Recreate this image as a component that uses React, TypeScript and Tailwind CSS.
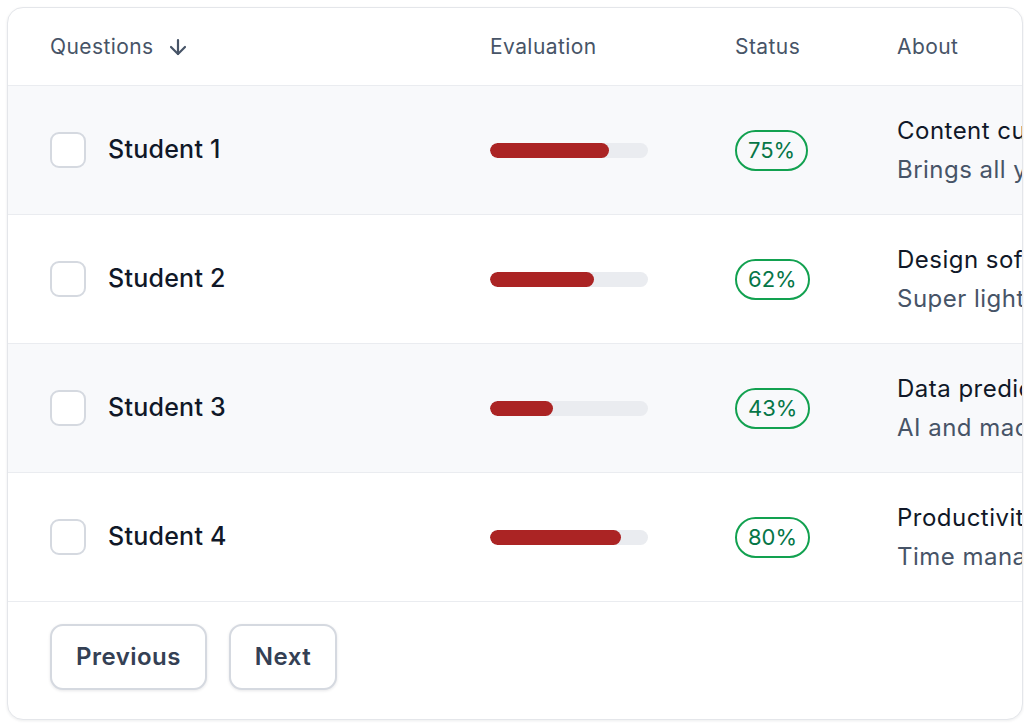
import React from "react";
import { ArrowDown } from "lucide-react";

const rows = [
  { name: "Student 1", pct: 75, fill: 75, title: "Content curation app", sub: "Brings all your news into one place" },
  { name: "Student 2", pct: 62, fill: 66, title: "Design software", sub: "Super lightweight design app" },
  { name: "Student 3", pct: 43, fill: 40, title: "Data prediction", sub: "AI and machine learning data" },
  { name: "Student 4", pct: 80, fill: 83, title: "Productivity app", sub: "Time management and productivity" },
];

export default function App() {
  return (
    <div className="w-[1024px] h-[725px] overflow-hidden bg-white pl-[7px] pt-[7px]" style={{ fontFamily: "Inter, 'Noto Sans', sans-serif" }}>
      <div className="w-[1016px] h-[713px] rounded-[16px] border border-[#e4e6ea] bg-white shadow-[0_1px_3px_rgba(16,24,40,0.08)] overflow-hidden flex flex-col">
        {/* header */}
        <div className="flex items-center h-[78px] border-b border-[#eaecf0] pl-[42px] text-[21px] tracking-[0.02em] text-[#475467] shrink-0">
          <div className="w-[440px] flex items-center gap-[12px]">
            <span>Questions</span>
            <ArrowDown className="w-[24px] h-[24px] text-[#475467]" strokeWidth={2.2} />
          </div>
          <div className="w-[245px]">Evaluation</div>
          <div className="w-[162px]">Status</div>
          <div className="flex-1 whitespace-nowrap">About</div>
        </div>
        {rows.map((r, i) => (
          <div
            key={r.name}
            className={`flex items-center h-[129px] border-b border-[#eaecf0] pl-[42px] shrink-0 ${i % 2 === 0 ? "bg-[#f8f9fb]" : "bg-white"}`}
          >
            <div className="w-[440px] flex items-center gap-[22px]">
              <div className="w-[36px] h-[36px] rounded-[9px] border-2 border-[#d5d9e0] bg-white" />
              <span className="text-[25px] font-medium tracking-[0.01em] text-[#101828]">{r.name}</span>
            </div>
            <div className="w-[245px]">
              <div className="w-[158px] h-[15px] rounded-full bg-[#eaecf0] overflow-hidden">
                <div className="h-full rounded-full bg-[#ab2424]" style={{ width: `${r.fill}%` }} />
              </div>
            </div>
            <div className="w-[162px]">
              <span className="inline-flex items-center justify-center h-[41px] px-[11px] rounded-full border-2 border-[#12a150] text-[22px] text-[#067647]">
                {r.pct}%
              </span>
            </div>
            <div className="flex-1 overflow-hidden whitespace-nowrap text-[24px] tracking-[0.02em] leading-[39px] pb-[1px]">
              <div className="text-[#101828]">{r.title}</div>
              <div className="text-[#475467]">{r.sub}</div>
            </div>
          </div>
        ))}
        <div className="flex items-start gap-[22px] pl-[42px] pt-[22px]">
          <button className="h-[66px] w-[157px] rounded-[13px] border-2 border-[#d5d9e0] bg-white shadow-[0_1px_3px_rgba(16,24,40,0.1)] text-[24px] font-semibold tracking-[0.02em] text-[#344054]">
            Previous
          </button>
          <button className="h-[66px] w-[108px] rounded-[13px] border-2 border-[#d5d9e0] bg-white shadow-[0_1px_3px_rgba(16,24,40,0.1)] text-[24px] font-semibold tracking-[0.02em] text-[#344054]">
            Next
          </button>
        </div>
      </div>
    </div>
  );
}
